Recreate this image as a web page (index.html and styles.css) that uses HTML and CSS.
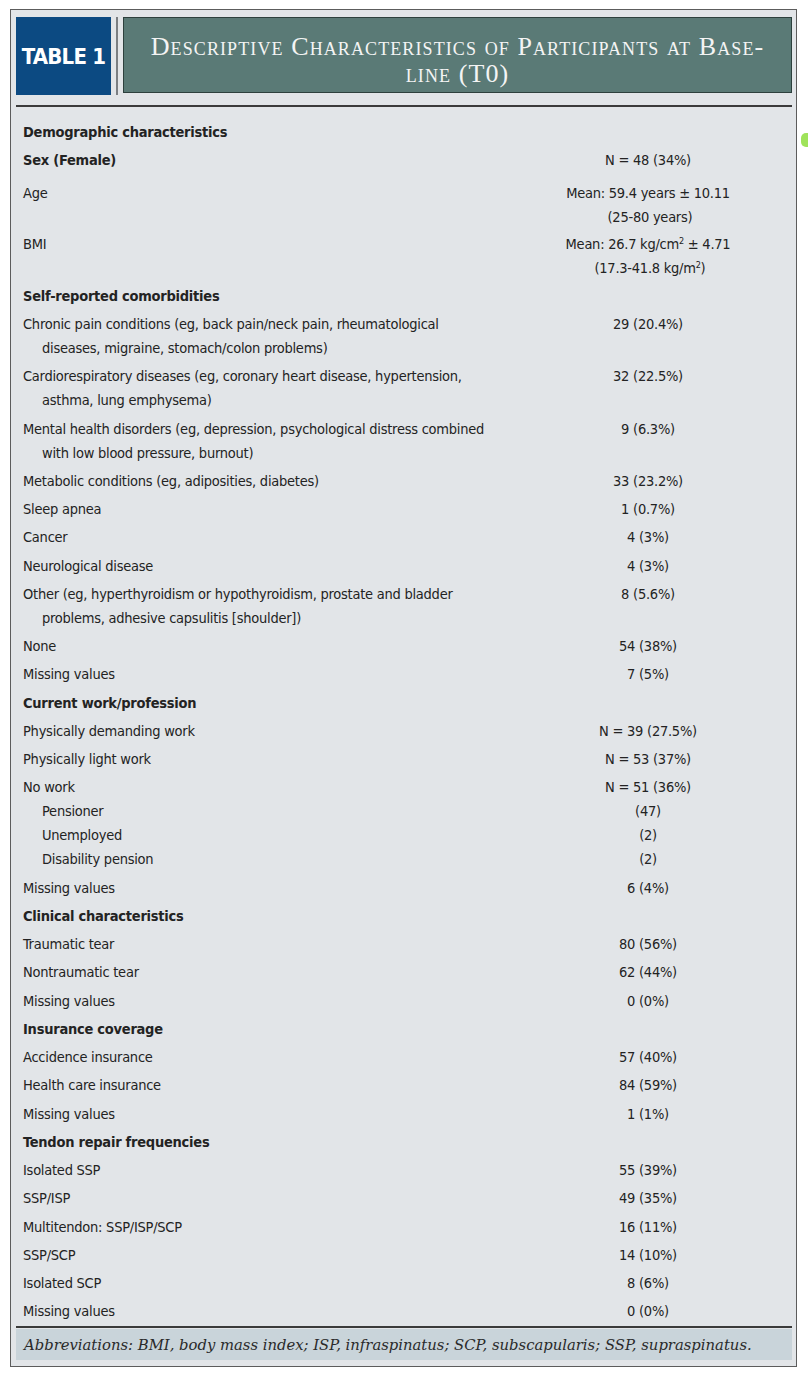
FILE: index.html
```html
<!DOCTYPE html>
<html lang="en">
<head>
    <meta charset="UTF-8">
    <meta name="viewport" content="width=device-width, initial-scale=1.0">
    <title>Table 1 - Descriptive Characteristics</title>
    <link rel="stylesheet" href="styles.css">
</head>
<body>
    <div class="panel">
        <!-- Encabezado -->
        <div class="header">
            <div class="label">TABLE 1</div>
            <div class="divider"></div>
            <div class="title">Descriptive Characteristics of Participants at Base-<br>line (T0)</div>
        </div>
        <div class="rule"></div>

        <table class="data">
            <tbody>
                <tr class="section"><td>Demographic characteristics</td><td></td></tr>
                <tr class="section"><td>Sex (Female)</td><td class="val">N = 48 (34%)</td></tr>
                <tr class="age"><td>Age</td><td class="val">Mean: 59.4 years ± 10.11<br>&nbsp;(25-80 years)</td></tr>
                <tr><td>BMI</td><td class="val">Mean: 26.7 kg/cm<sup>2</sup> ± 4.71<br>&nbsp;(17.3-41.8 kg/m<sup>2</sup>)</td></tr>

                <tr class="section"><td>Self-reported comorbidities</td><td></td></tr>
                <tr><td class="hang">Chronic pain conditions (eg, back pain/neck pain, rheumatological<br>diseases, migraine, stomach/colon problems)</td><td class="val">29 (20.4%)</td></tr>
                <tr><td class="hang">Cardiorespiratory diseases (eg, coronary heart disease, hypertension,<br>asthma, lung emphysema)</td><td class="val">32 (22.5%)</td></tr>
                <tr><td class="hang">Mental health disorders (eg, depression, psychological distress combined<br>with low blood pressure, burnout)</td><td class="val">9 (6.3%)</td></tr>
                <tr><td>Metabolic conditions (eg, adiposities, diabetes)</td><td class="val">33 (23.2%)</td></tr>
                <tr><td>Sleep apnea</td><td class="val">1 (0.7%)</td></tr>
                <tr><td>Cancer</td><td class="val">4 (3%)</td></tr>
                <tr><td>Neurological disease</td><td class="val">4 (3%)</td></tr>
                <tr><td class="hang">Other (eg, hyperthyroidism or hypothyroidism, prostate and bladder<br>problems, adhesive capsulitis [shoulder])</td><td class="val">8 (5.6%)</td></tr>
                <tr><td>None</td><td class="val">54 (38%)</td></tr>
                <tr><td>Missing values</td><td class="val">7 (5%)</td></tr>

                <tr class="section"><td>Current work/profession</td><td></td></tr>
                <tr><td>Physically demanding work</td><td class="val">N = 39 (27.5%)</td></tr>
                <tr><td>Physically light work</td><td class="val">N = 53 (37%)</td></tr>
                <tr>
                    <td>No work<br><span class="sub">Pensioner</span><br><span class="sub">Unemployed</span><br><span class="sub">Disability pension</span></td>
                    <td class="val">N = 51 (36%)<br>(47)<br>(2)<br>(2)</td>
                </tr>
                <tr><td>Missing values</td><td class="val">6 (4%)</td></tr>

                <tr class="section"><td>Clinical characteristics</td><td></td></tr>
                <tr><td>Traumatic tear</td><td class="val">80 (56%)</td></tr>
                <tr><td>Nontraumatic tear</td><td class="val">62 (44%)</td></tr>
                <tr><td>Missing values</td><td class="val">0 (0%)</td></tr>

                <tr class="section"><td>Insurance coverage</td><td></td></tr>
                <tr><td>Accidence insurance</td><td class="val">57 (40%)</td></tr>
                <tr><td>Health care insurance</td><td class="val">84 (59%)</td></tr>
                <tr><td>Missing values</td><td class="val">1 (1%)</td></tr>

                <tr class="section"><td>Tendon repair frequencies</td><td></td></tr>
                <tr><td>Isolated SSP</td><td class="val">55 (39%)</td></tr>
                <tr><td>SSP/ISP</td><td class="val">49 (35%)</td></tr>
                <tr><td>Multitendon: SSP/ISP/SCP</td><td class="val">16 (11%)</td></tr>
                <tr><td>SSP/SCP</td><td class="val">14 (10%)</td></tr>
                <tr><td>Isolated SCP</td><td class="val">8 (6%)</td></tr>
                <tr><td>Missing values</td><td class="val">0 (0%)</td></tr>
            </tbody>
        </table>

        <!-- Nota al pie -->
        <div class="rule foot-rule"></div>
        <div class="footnote">Abbreviations: BMI, body mass index; ISP, infraspinatus; SCP, subscapularis; SSP, supraspinatus.</div>
    </div>
    <span class="mark"></span>
</body>
</html>
```

FILE: styles.css
```css
body {
    margin: 0;
    background: #ffffff;
    font-family: "DejaVu Sans Condensed", "Liberation Sans", sans-serif;
    color: #232323;
}
.panel {
    width: 776px;
    margin: 9px 0 0 10px;
    padding: 7px 4px 6px 5px;
    border: 1px solid #5c5c5c;
    background: #e2e5e8;
}
.header {
    display: flex;
    align-items: flex-start;
    height: 78px;
}
.label {
    width: 95px;
    height: 78px;
    background: #0c4a82;
    color: #ffffff;
    font-weight: bold;
    font-size: 22px;
    letter-spacing: -0.8px;
    white-space: nowrap;
    display: flex;
    align-items: center;
    justify-content: center;
}
.divider {
    width: 2px;
    height: 78px;
    margin: 0 5px;
    background: #7a7e82;
}
.title {
    flex: 1;
    height: 76px;
    border: 1px solid #2d403d;
    background: #5a7a76;
    color: #f4f4f4;
    font-family: "Liberation Serif", serif;
    font-variant: small-caps;
    font-size: 26px;
    letter-spacing: 1.1px;
    line-height: 27px;
    text-align: center;
    padding-top: 15px;
    box-sizing: border-box;
}
.rule {
    margin-top: 10px;
    border-top: 2px solid #3b3b3b;
}
table.data {
    width: 100%;
    border-collapse: collapse;
    margin-top: 11px;
    font-size: 14.5px;
    letter-spacing: -0.25px;
    line-height: 24px;
}
table.data td {
    padding: 2.13px 0 2.13px 7px;
    vertical-align: top;
    white-space: nowrap;
}
table.data td.val {
    width: 288px;
    padding-left: 0;
    text-align: center;
}
table.data tr.section td {
    font-weight: bold;
}
table.data tr.section td.val {
    font-weight: normal;
}
table.data tr.age td {
    padding-top: 6px;
    padding-bottom: 1px;
}
table.data td.hang {
    padding-left: 26px;
    text-indent: -19px;
}
.sub {
    padding-left: 19px;
}
sup {
    font-size: 9px;
    line-height: 0;
    vertical-align: 5px;
}
.foot-rule {
    margin-top: 0;
}
.footnote {
    margin-top: 1px;
    height: 31px;
    padding: 0 8px;
    box-sizing: border-box;
    background: #c9d4da;
    font-family: "DejaVu Serif", serif;
    font-style: italic;
    font-size: 14.8px;
    line-height: 31px;
    color: #2a2a2a;
}
.mark {
    position: absolute;
    left: 801px;
    top: 133px;
    width: 7px;
    height: 14px;
    background: #9fe35a;
    border-radius: 5px 0 0 5px;
}
```
